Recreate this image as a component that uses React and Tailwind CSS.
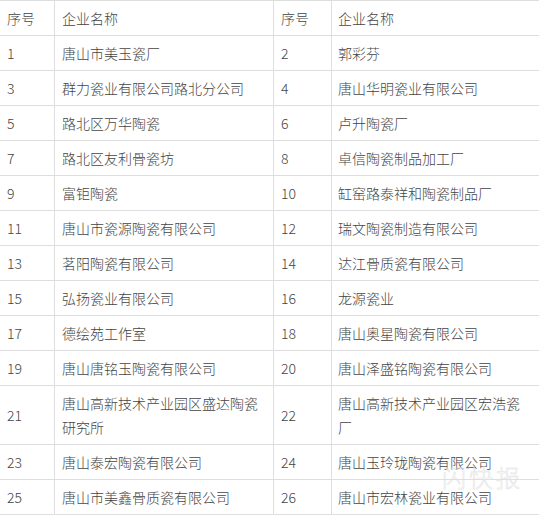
const rows = [
  ["1", "唐山市美玉瓷厂", "2", "郭彩芬"],
  ["3", "群力瓷业有限公司路北分公司", "4", "唐山华明瓷业有限公司"],
  ["5", "路北区万华陶瓷", "6", "卢升陶瓷厂"],
  ["7", "路北区友利骨瓷坊", "8", "卓信陶瓷制品加工厂"],
  ["9", "富钜陶瓷", "10", "缸窑路泰祥和陶瓷制品厂"],
  ["11", "唐山市瓷源陶瓷有限公司", "12", "瑞文陶瓷制造有限公司"],
  ["13", "茗阳陶瓷有限公司", "14", "达江骨质瓷有限公司"],
  ["15", "弘扬瓷业有限公司", "16", "龙源瓷业"],
  ["17", "德绘苑工作室", "18", "唐山奥星陶瓷有限公司"],
  ["19", "唐山唐铭玉陶瓷有限公司", "20", "唐山泽盛铭陶瓷有限公司"],
  ["21", "唐山高新技术产业园区盛达陶瓷研究所", "22", "唐山高新技术产业园区宏浩瓷厂"],
  ["23", "唐山泰宏陶瓷有限公司", "24", "唐山玉玲珑陶瓷有限公司"],
  ["25", "唐山市美鑫骨质瓷有限公司", "26", "唐山市宏林瓷业有限公司"],
];

function Row({ cells }) {
  return (
    <div className="flex border-b border-[#dedede]">
      <div className="w-[55px] shrink-0 border-r border-[#dedede] px-[7px] py-[5px] flex items-center">
        {cells[0]}
      </div>
      <div className="w-[219px] shrink-0 border-r border-[#dedede] px-[7px] py-[5px] flex items-center">
        {cells[1]}
      </div>
      <div className="w-[58px] shrink-0 border-r border-[#dedede] px-[7px] py-[5px] flex items-center">
        {cells[2]}
      </div>
      <div className="w-[207px] shrink-0 px-[6px] py-[5px] flex items-center">
        {cells[3]}
      </div>
    </div>
  );
}

export default function App() {
  return (
    <div className="relative w-[539px] h-[516px] bg-white overflow-hidden text-[14px] leading-[24px] text-[#444] font-light font-['Noto_Sans_CJK_SC','Microsoft_YaHei',sans-serif]">
      <div className="border-t border-[#dedede]">
        <Row cells={["序号", "企业名称", "序号", "企业名称"]} />
        {rows.map((r) => (
          <Row key={r[0]} cells={r} />
        ))}
      </div>

      {/* watermark */}
      <div className="absolute left-[442px] top-[463px] text-[24px] leading-[28px] tracking-[3px] text-transparent [-webkit-text-stroke:0.5px_#e0e0e0] select-none pointer-events-none">
        闪快报
      </div>
    </div>
  );
}
